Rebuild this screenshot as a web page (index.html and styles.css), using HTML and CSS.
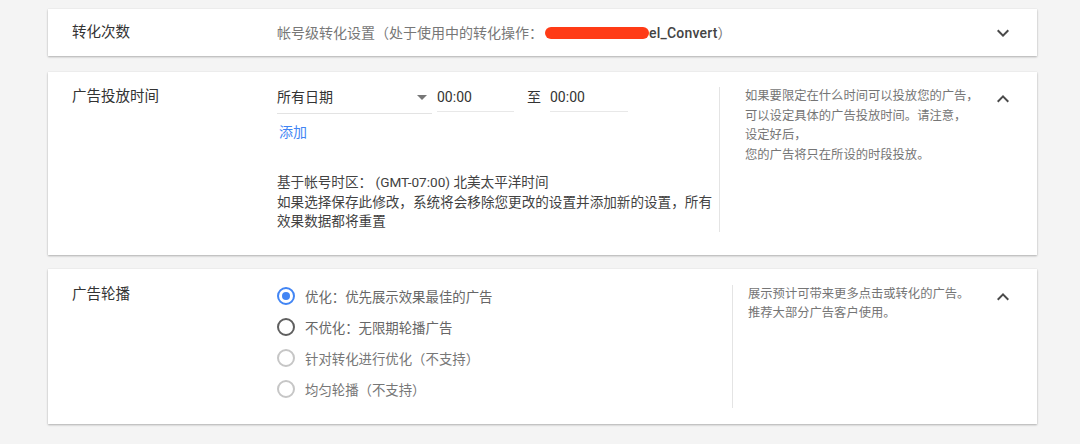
FILE: index.html
```html
<!DOCTYPE html>
<html lang="zh-CN">
<head>
<meta charset="utf-8">
<title>设置</title>
<link rel="stylesheet" href="styles.css">
</head>
<body>
<div class="page">
  <section class="card card-collapsed">
    <div class="label">转化次数</div>
    <div class="summary">帐号级转化设置（处于使用中的转化操作：<span class="redact"></span><span class="conv">el_Convert</span>）</div>
    <div class="chev"><svg viewBox="0 0 24 24" width="24" height="24"><path d="M16.59 8.59L12 13.17 7.41 8.59 6 10l6 6 6-6z"/></svg></div>
  </section>

  <section class="card card-open card-time">
    <div class="label">广告投放时间</div>
    <div class="content content-time">
      <div class="time-row">
        <div class="select"><span>所有日期</span><span class="caret"></span></div>
        <div class="tinput">00:00</div>
        <div class="to">至</div>
        <div class="tinput">00:00</div>
      </div>
      <div class="add">添加</div>
      <div class="note">基于帐号时区： (GMT-07:00) 北美太平洋时间<br>如果选择保存此修改，系统将会移除您更改的设置并添加新的设置，所有<br>效果数据都将重置</div>
    </div>
    <div class="help help-time">如果要限定在什么时间可以投放您的广告，<br>可以设定具体的广告投放时间。请注意，<br>设定好后，<br>您的广告将只在所设的时段投放。</div>
    <div class="chev chev-open"><svg viewBox="0 0 24 24" width="24" height="24"><path d="M12 8l-6 6 1.41 1.41L12 10.83l4.59 4.58L18 14z"/></svg></div>
  </section>

  <section class="card card-open card-rot">
    <div class="label">广告轮播</div>
    <div class="content content-rot">
      <div class="radio-row"><span class="radio radio-on"></span><span class="rtext">优化：优先展示效果最佳的广告</span></div>
      <div class="radio-row"><span class="radio radio-off"></span><span class="rtext">不优化：无限期轮播广告</span></div>
      <div class="radio-row"><span class="radio radio-dis"></span><span class="rtext rtext-dis">针对转化进行优化（不支持）</span></div>
      <div class="radio-row"><span class="radio radio-dis"></span><span class="rtext rtext-dis">均匀轮播（不支持）</span></div>
    </div>
    <div class="help help-rot">展示预计可带来更多点击或转化的广告。<br>推荐大部分广告客户使用。</div>
    <div class="chev chev-open"><svg viewBox="0 0 24 24" width="24" height="24"><path d="M12 8l-6 6 1.41 1.41L12 10.83l4.59 4.58L18 14z"/></svg></div>
  </section>
</div>
</body>
</html>
```

FILE: styles.css
```css
html, body {
  margin: 0;
  padding: 0;
  background: #f4f4f4;
}
body {
  font-family: "Roboto", "Noto Sans CJK SC", sans-serif;
  color: #333;
  width: 1080px;
  height: 444px;
  overflow: hidden;
}
.page {
  padding: 9px 0 0 48px;
  width: 989px;
  display: flex;
  flex-direction: column;
}
.card {
  background: #fff;
  box-shadow: 0 1px 2px rgba(0,0,0,0.28), 0 0 1px rgba(0,0,0,0.08);
  display: flex;
  box-sizing: border-box;
}
.label {
  width: 205px;
  flex: none;
  font-size: 14.5px;
  line-height: 20px;
  color: #333;
}
.card-collapsed {
  height: 47px;
  align-items: center;
  padding: 0 22px 0 24px;
  margin-bottom: 16px;
}
.summary {
  flex: 1;
  font-size: 14px;
  line-height: 20px;
  color: #777;
  display: flex;
  align-items: center;
  white-space: nowrap;
}
.redact {
  display: inline-block;
  width: 104px;
  height: 12px;
  background: #ff3b16;
  border-radius: 6px;
  margin-left: 2px;
  margin-top: 1px;
}
.conv {
  color: #444;
  font-weight: 500;
  letter-spacing: 0.2px;
}
.chev {
  width: 24px;
  height: 24px;
  flex: none;
  fill: #4a4a4a;
}
.chev svg { display: block; }

.card-open {
  padding: 15px 22px 23px 24px;
  align-items: stretch;
}
.card-time { margin-bottom: 14px; }
.card-rot { padding: 16px 22px 16px 24px; }

.content { flex: none; }
.content-time { width: 442px; }
.content-rot { width: 455px; padding-bottom: 8px; }

.time-row {
  display: flex;
  align-items: flex-start;
  font-size: 14px;
  line-height: 20px;
  color: #333;
}
.select {
  width: 155px;
  box-sizing: border-box;
  display: flex;
  justify-content: space-between;
  align-items: center;
  padding-bottom: 6px;
  border-bottom: 1px solid #e3e3e3;
}
.caret {
  width: 0;
  height: 0;
  border-left: 5px solid transparent;
  border-right: 5px solid transparent;
  border-top: 5px solid #777;
  margin-right: 5px;
}
.tinput {
  width: 77px;
  padding-bottom: 4px;
  border-bottom: 1px solid #e8e8e8;
  margin-left: 5px;
}
.to {
  margin-left: 13px;
  margin-right: 9px;
}
.tinput + .to + .tinput { margin-left: 0; width: 78px; }
.add {
  margin-top: 8px;
  font-size: 14px;
  line-height: 20px;
  color: #4285f4;
  padding-left: 2px;
}
.note {
  margin-top: 31px;
  font-size: 13.6px;
  line-height: 19.5px;
  color: #424242;
  white-space: nowrap;
}
.help {
  flex: 1;
  border-left: 1px solid #e4e4e4;
  font-size: 12.3px;
  line-height: 19.5px;
  color: #757575;
  white-space: nowrap;
}
.help-time { padding-left: 25px; }
.help-rot { padding-left: 15px; }

.radio-row {
  display: flex;
  align-items: center;
  height: 22px;
  margin-bottom: 9px;
}
.radio-row:last-child { margin-bottom: 0; }
.radio {
  width: 18px;
  height: 18px;
  box-sizing: border-box;
  border-radius: 50%;
  border: 2px solid #5f5f5f;
  flex: none;
  display: flex;
  align-items: center;
  justify-content: center;
}
.radio-on { border-color: #4285f4; }
.radio-on::after {
  content: "";
  width: 8px;
  height: 8px;
  border-radius: 50%;
  background: #4285f4;
}
.radio-dis { border-color: #c6c6c6; }
.rtext {
  margin-left: 10px;
  font-size: 13.4px;
  color: #666;
  white-space: nowrap;
}
.rtext-dis { color: #777; }
```
